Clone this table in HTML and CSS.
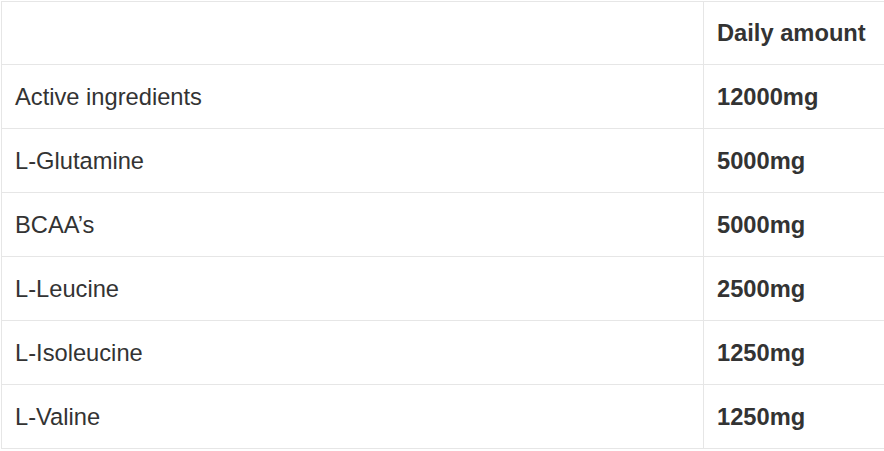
FILE: index.html
```html
<!DOCTYPE html>
<html>
<head>
<meta charset="utf-8">
<link rel="stylesheet" href="styles.css">
</head>
<body>
<table class="nutri">
  <thead>
    <tr class="head"><th class="name"></th><th class="amount">Daily amount</th></tr>
  </thead>
  <tbody>
    <tr><td class="name">Active ingredients</td><td class="amount">12000mg</td></tr>
    <tr><td class="name">L-Glutamine</td><td class="amount">5000mg</td></tr>
    <tr><td class="name">BCAA’s</td><td class="amount">5000mg</td></tr>
    <tr><td class="name">L-Leucine</td><td class="amount">2500mg</td></tr>
    <tr><td class="name">L-Isoleucine</td><td class="amount">1250mg</td></tr>
    <tr><td class="name">L-Valine</td><td class="amount">1250mg</td></tr>
  </tbody>
</table>
</body>
</html>
```
FILE: styles.css
```css
html, body {
  margin: 0;
  padding: 0;
  background: #fff;
  overflow: hidden;
}
body {
  padding: 1px 0 0 1px;
  font-family: "Liberation Sans", Arial, sans-serif;
  color: #333;
}
.nutri {
  border-collapse: collapse;
  table-layout: fixed;
  width: 920px;
  font-size: 23.7px;
}
.nutri th, .nutri td {
  border: 1px solid #e6e6e6;
  height: 64px;
  padding: 2px 13px 0;
  text-align: left;
  vertical-align: middle;
  box-sizing: border-box;
  white-space: nowrap;
}
.nutri .head th {
  height: 63px;
  padding-top: 0;
}
.nutri .name {
  width: 702px;
  font-weight: normal;
}
.nutri .amount {
  font-weight: bold;
}
```
